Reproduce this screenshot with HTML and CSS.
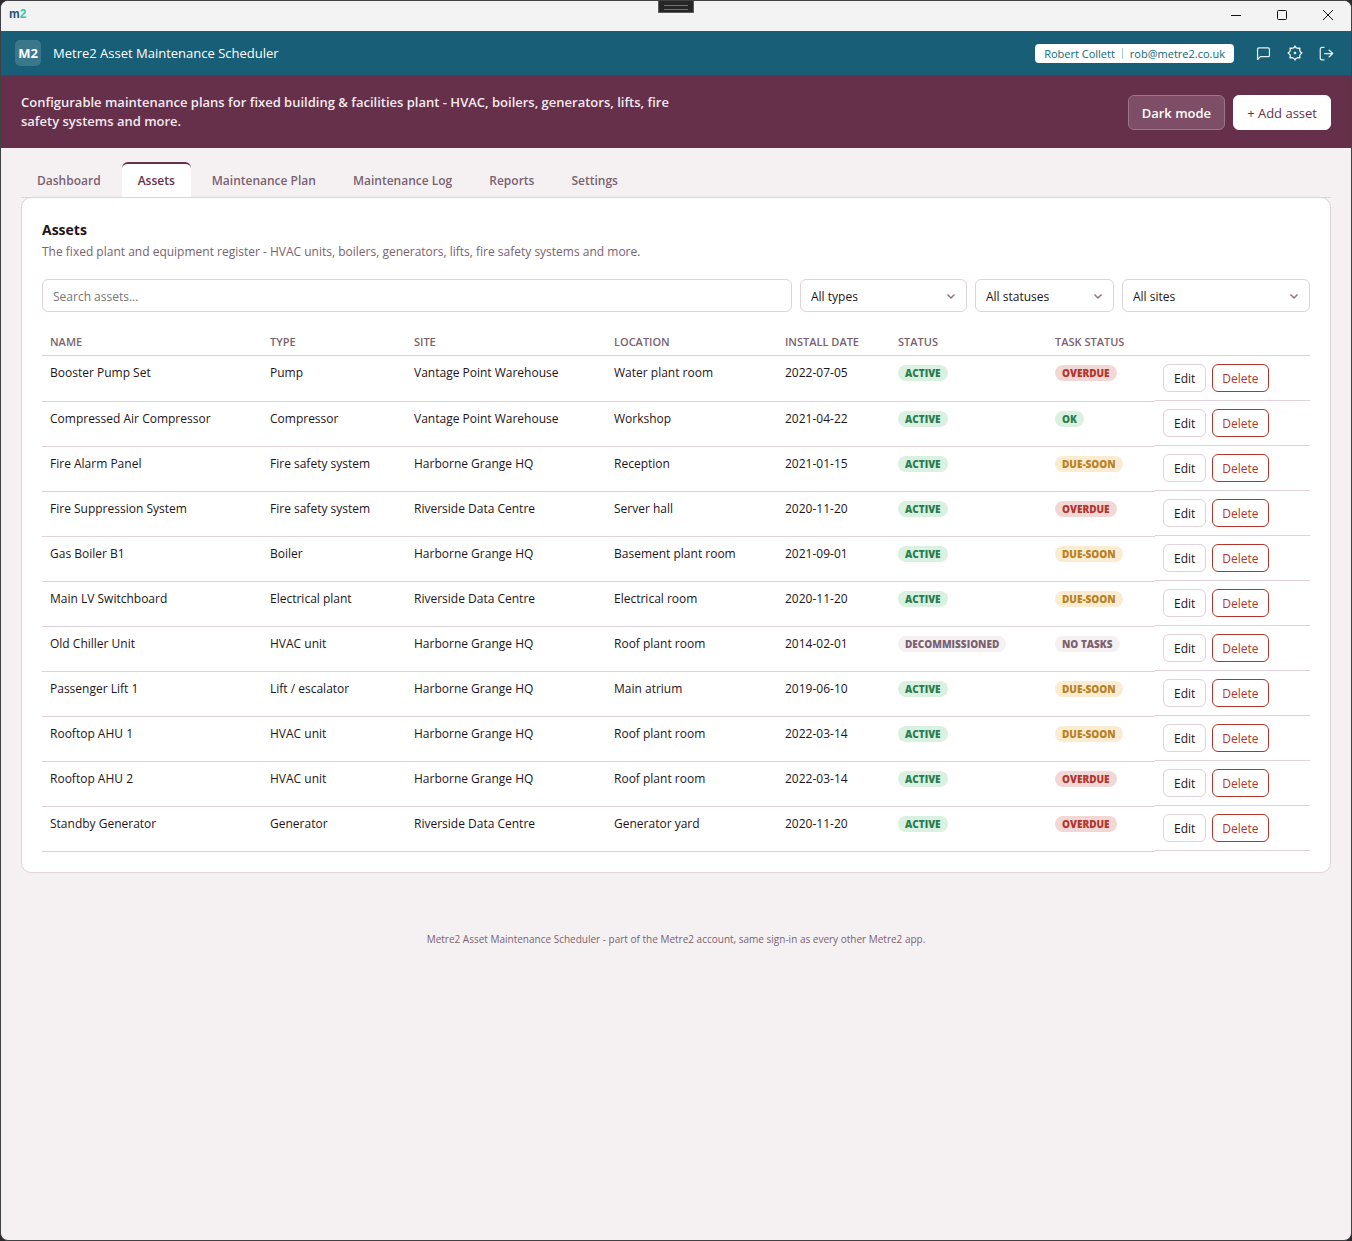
FILE: index.html
```
<!DOCTYPE html>
<html lang="en">
<head>
    <meta charset="UTF-8">
    <meta name="viewport" content="width=device-width, initial-scale=1.0">
    <title>Metre2 Asset Maintenance Scheduler</title>
    <link rel="stylesheet" href="styles.css">
</head>
<body>
    <div class="window">
        <div class="titlebar">
            <span class="app-icon">m<span>2</span></span>
            <div class="grip"></div>
            <div class="window-controls">
                <button type="button" aria-label="Minimise"><svg width="12" height="12" viewBox="0 0 12 12"><path d="M1 6.5h10"/></svg></button>
                <button type="button" aria-label="Maximise"><svg width="12" height="12" viewBox="0 0 12 12"><rect x="1.5" y="1.5" width="9" height="9" rx="1"/></svg></button>
                <button type="button" aria-label="Close"><svg width="12" height="12" viewBox="0 0 12 12"><path d="M1 1l10 10M11 1L1 11"/></svg></button>
            </div>
        </div>

        <header class="topbar">
            <span class="logo">M2</span>
            <span class="app-name">Metre2 Asset Maintenance Scheduler</span>
            <div class="user"><span>Robert Collett</span><span class="email">rob@metre2.co.uk</span></div>
            <div class="top-icons">
                <button type="button" aria-label="Feedback"><svg width="15" height="15" viewBox="0 0 24 24"><path d="M21.500 15a2 2 0 0 1-2 2H7l-4.500 4.500V5a2 2 0 0 1 2-2h15a2 2 0 0 1 2 2z"/></svg></button>
                <button type="button" aria-label="Account settings"><svg width="16" height="16" viewBox="0 0 24 24"><path d="M12 1.500q1.200 3.200 3.200 3.300t4.200-.2q-.5 3-.1 4.300t3.200 3.100q-2.800 1.700-3.200 3.100t.1 4.300q-2.200-.4-4.200-.2T12 22.500q-1.200-3.200-3.200-3.300t-4.200.2q.5-3 .1-4.300T1.500 12q2.800-1.700 3.200-3.100t-.1-4.300q2.200.4 4.200.2T12 1.500z"/><circle cx="12" cy="12" r="1"/></svg></button>
                <button type="button" aria-label="Sign out"><svg width="15" height="15" viewBox="0 0 24 24"><path d="M8 22H5a3 3 0 0 1-3-3V5a3 3 0 0 1 3-3h3M16 17.500l6-5.500-6-5.500M22 12H9"/></svg></button>
            </div>
        </header>

        <div class="hero">
            <p>Configurable maintenance plans for fixed building &amp; facilities plant - HVAC, boilers, generators, lifts, fire safety systems and more.</p>
            <div class="hero-actions">
                <button type="button" class="btn-ghost">Dark mode</button>
                <button type="button" class="btn-light">+ Add asset</button>
            </div>
        </div>

        <main class="content">
            <nav class="tabs">
                <a href="#dashboard">Dashboard</a>
                <a href="#assets" class="active">Assets</a>
                <a href="#plan">Maintenance Plan</a>
                <a href="#log">Maintenance Log</a>
                <a href="#reports">Reports</a>
                <a href="#settings">Settings</a>
            </nav>

            <section class="panel" id="assets">
                <h2>Assets</h2>
                <p class="panel-desc">The fixed plant and equipment register - HVAC units, boilers, generators, lifts, fire safety systems and more.</p>

                <div class="filters">
                    <input type="text" placeholder="Search assets..." aria-label="Search assets">
                    <div class="select types">
                        <select aria-label="Type"><option>All types</option></select>
                        <svg width="8" height="5" viewBox="0 0 8 5"><path d="M.5.5L4 4 7.500.5"/></svg>
                    </div>
                    <div class="select statuses">
                        <select aria-label="Status"><option>All statuses</option></select>
                        <svg width="8" height="5" viewBox="0 0 8 5"><path d="M.5.5L4 4 7.500.5"/></svg>
                    </div>
                    <div class="select sites">
                        <select aria-label="Site"><option>All sites</option></select>
                        <svg width="8" height="5" viewBox="0 0 8 5"><path d="M.5.5L4 4 7.500.5"/></svg>
                    </div>
                </div>

                <table>
                    <thead>
                        <tr>
                            <th>Name</th>
                            <th class="col-type">Type</th>
                            <th class="col-site">Site</th>
                            <th class="col-location">Location</th>
                            <th class="col-date">Install date</th>
                            <th class="col-status">Status</th>
                            <th class="col-task">Task status</th>
                            <th class="col-actions"></th>
                        </tr>
                    </thead>
                    <tbody>
                        <tr>
                            <td>Booster Pump Set</td><td>Pump</td><td>Vantage Point Warehouse</td><td>Water plant room</td><td>2022-07-05</td>
                            <td><span class="pill green">Active</span></td><td><span class="pill red">Overdue</span></td>
                            <td class="actions"><button type="button">Edit</button><button type="button" class="danger">Delete</button></td>
                        </tr>
                        <tr>
                            <td>Compressed Air Compressor</td><td>Compressor</td><td>Vantage Point Warehouse</td><td>Workshop</td><td>2021-04-22</td>
                            <td><span class="pill green">Active</span></td><td><span class="pill green">OK</span></td>
                            <td class="actions"><button type="button">Edit</button><button type="button" class="danger">Delete</button></td>
                        </tr>
                        <tr>
                            <td>Fire Alarm Panel</td><td>Fire safety system</td><td>Harborne Grange HQ</td><td>Reception</td><td>2021-01-15</td>
                            <td><span class="pill green">Active</span></td><td><span class="pill amber">Due-soon</span></td>
                            <td class="actions"><button type="button">Edit</button><button type="button" class="danger">Delete</button></td>
                        </tr>
                        <tr>
                            <td>Fire Suppression System</td><td>Fire safety system</td><td>Riverside Data Centre</td><td>Server hall</td><td>2020-11-20</td>
                            <td><span class="pill green">Active</span></td><td><span class="pill red">Overdue</span></td>
                            <td class="actions"><button type="button">Edit</button><button type="button" class="danger">Delete</button></td>
                        </tr>
                        <tr>
                            <td>Gas Boiler B1</td><td>Boiler</td><td>Harborne Grange HQ</td><td>Basement plant room</td><td>2021-09-01</td>
                            <td><span class="pill green">Active</span></td><td><span class="pill amber">Due-soon</span></td>
                            <td class="actions"><button type="button">Edit</button><button type="button" class="danger">Delete</button></td>
                        </tr>
                        <tr>
                            <td>Main LV Switchboard</td><td>Electrical plant</td><td>Riverside Data Centre</td><td>Electrical room</td><td>2020-11-20</td>
                            <td><span class="pill green">Active</span></td><td><span class="pill amber">Due-soon</span></td>
                            <td class="actions"><button type="button">Edit</button><button type="button" class="danger">Delete</button></td>
                        </tr>
                        <tr>
                            <td>Old Chiller Unit</td><td>HVAC unit</td><td>Harborne Grange HQ</td><td>Roof plant room</td><td>2014-02-01</td>
                            <td><span class="pill">Decommissioned</span></td><td><span class="pill">No tasks</span></td>
                            <td class="actions"><button type="button">Edit</button><button type="button" class="danger">Delete</button></td>
                        </tr>
                        <tr>
                            <td>Passenger Lift 1</td><td>Lift / escalator</td><td>Harborne Grange HQ</td><td>Main atrium</td><td>2019-06-10</td>
                            <td><span class="pill green">Active</span></td><td><span class="pill amber">Due-soon</span></td>
                            <td class="actions"><button type="button">Edit</button><button type="button" class="danger">Delete</button></td>
                        </tr>
                        <tr>
                            <td>Rooftop AHU 1</td><td>HVAC unit</td><td>Harborne Grange HQ</td><td>Roof plant room</td><td>2022-03-14</td>
                            <td><span class="pill green">Active</span></td><td><span class="pill amber">Due-soon</span></td>
                            <td class="actions"><button type="button">Edit</button><button type="button" class="danger">Delete</button></td>
                        </tr>
                        <tr>
                            <td>Rooftop AHU 2</td><td>HVAC unit</td><td>Harborne Grange HQ</td><td>Roof plant room</td><td>2022-03-14</td>
                            <td><span class="pill green">Active</span></td><td><span class="pill red">Overdue</span></td>
                            <td class="actions"><button type="button">Edit</button><button type="button" class="danger">Delete</button></td>
                        </tr>
                        <tr>
                            <td>Standby Generator</td><td>Generator</td><td>Riverside Data Centre</td><td>Generator yard</td><td>2020-11-20</td>
                            <td><span class="pill green">Active</span></td><td><span class="pill red">Overdue</span></td>
                            <td class="actions"><button type="button">Edit</button><button type="button" class="danger">Delete</button></td>
                        </tr>
                    </tbody>
                </table>
            </section>
        </main>

        <footer>Metre2 Asset Maintenance Scheduler - part of the Metre2 account, same sign-in as every other Metre2 app.</footer>
    </div>
</body>
</html>
```
FILE: styles.css
```
:root {
    --teal: #175e76;
    --plum: #66304a;
    --bg: #f5f1f3;
    --border: #e0d2d9;
    --text: #1e141a;
    --muted: #7a6270;
    --green: #2a7d50;
    --red: #b3352c;
    --amber: #b98122;
}

* {
    box-sizing: border-box;
}

body {
    margin: 0;
    background: #2b2b2d;
    color: var(--text);
    font-family: "Segoe UI", "Open Sans", "Noto Sans", sans-serif;
    font-size: 12px;
    line-height: 18px;
}

button,
input,
select {
    font: inherit;
    color: inherit;
}

svg {
    fill: none;
    stroke: currentColor;
    display: block;
}

.window {
    display: flex;
    flex-direction: column;
    min-height: 100vh;
    background: var(--bg);
    border: 1px solid #414143;
    border-radius: 8px;
    overflow: hidden;
}

/* Title bar */
.titlebar {
    display: grid;
    grid-template-columns: 1fr auto 1fr;
    height: 30px;
    background: #f3f3f3;
    color: #111;
}

.app-icon {
    padding: 3px 8px;
    font-family: "Liberation Sans", Arial, sans-serif;
    font-size: 12px;
    line-height: 20px;
    font-weight: 700;
    color: #24507c;
}

.app-icon span {
    color: #35c8a0;
}

.grip {
    width: 36px;
    height: 12px;
    padding: 4px 5px;
    background: #262626;
    border: 1px solid #5c5c5c;
    border-top: 0;
}

.grip::before {
    content: "";
    display: block;
    height: 3px;
    border: solid #6e6e6e;
    border-width: 1px 0;
}

.window-controls {
    display: flex;
    justify-content: flex-end;
}

.window-controls button {
    display: grid;
    place-items: center;
    width: 46px;
    height: 28px;
    padding: 0;
    border: 0;
    background: none;
}

/* Top bar */
.topbar {
    display: flex;
    align-items: center;
    height: 44px;
    padding: 0 17px 0 14px;
    background: var(--teal);
    color: #fff;
}

.logo {
    width: 26px;
    margin-right: 12px;
    border-radius: 5px;
    background: #3a778b;
    font-size: 13px;
    font-weight: 700;
    line-height: 26px;
    text-align: center;
}

.app-name {
    font-size: 13px;
    font-weight: 500;
}

.user {
    display: flex;
    margin-left: auto;
    padding: 0 9px;
    border-radius: 4px;
    background: #fff;
    color: #0f6a78;
    font-size: 11px;
    line-height: 19px;
}

.email {
    display: flex;
    align-items: center;
}

.email::before {
    content: "";
    height: 11px;
    margin: 0 7px;
    border-left: 1px solid #a9cbd2;
}

.top-icons {
    display: flex;
    gap: 16px;
    margin-left: 22px;
}

.top-icons button {
    display: grid;
    place-items: center;
    height: 16px;
    padding: 0;
    border: 0;
    background: none;
    color: #e5f0f2;
    stroke-width: 2;
    stroke-linejoin: round;
    stroke-linecap: round;
}

/* Hero */
.hero {
    display: flex;
    align-items: center;
    justify-content: space-between;
    padding: 18px 20px 17px;
    background: var(--plum);
    color: #f3eaee;
}

.hero p {
    max-width: 680px;
    margin: 0;
    font-weight: 600;
    font-size: 13px;
    line-height: 19px;
}

.hero-actions {
    display: flex;
    gap: 8px;
}

.hero-actions button {
    height: 35px;
    padding: 2px 13px 0;
    border: 1px solid #fff;
    border-radius: 6px;
    font-size: 13px;
    font-weight: 600;
}

.hero-actions .btn-ghost {
    background: #7d4e65;
    border-color: #9c7688;
    color: #fff;
}

.hero-actions .btn-light {
    background: #fff;
    color: var(--plum);
    font-weight: 500;
}

/* Tabs and panel */
.content {
    padding: 14px 20px 0;
}

.tabs {
    display: flex;
    gap: 5px;
    border-bottom: 1px solid var(--border);
}

.tabs a {
    padding: 8px 16px 7px;
    border-top: 2px solid transparent;
    border-radius: 6px 6px 0 0;
    color: var(--muted);
    font-weight: 600;
    text-decoration: none;
}

.tabs .active {
    border-top-color: var(--plum);
    background: #fff;
    color: var(--plum);
}

.panel {
    margin-top: -1px;
    padding: 20px;
    background: #fff;
    border: 1px solid var(--border);
    border-radius: 10px;
}

.panel h2 {
    margin: 2px 0 3px;
    font-size: 14px;
    line-height: 20px;
}

.panel-desc {
    margin: 0 0 18px;
    color: var(--muted);
}

.filters {
    display: flex;
    gap: 8px;
    margin-bottom: 16px;
}

.filters input,
.filters select {
    width: 100%;
    height: 33px;
    padding: 2px 10px 0;
    background: #fff;
    border: 1px solid var(--border);
    border-radius: 6px;
    appearance: none;
}

.filters input {
    flex: 1;
}

.filters input::placeholder {
    color: #757575;
}

.select {
    position: relative;
}

.select svg {
    position: absolute;
    right: 12px;
    top: 15px;
    color: #8d7683;
    stroke-width: 1.500;
    pointer-events: none;
}

.types {
    width: 167px;
}

.statuses {
    width: 139px;
}

.sites {
    width: 188px;
}

/* Asset table */
table {
    width: 100%;
    border-collapse: collapse;
    table-layout: fixed;
}

th {
    padding: 6px 8px;
    border-bottom: 1px solid var(--border);
    color: var(--muted);
    font-size: 11px;
    line-height: 15px;
    text-align: left;
    text-transform: uppercase;
    font-weight: 600;
}

td {
    padding: 8px;
    border-bottom: 1px solid var(--border);
    vertical-align: top;
}

.col-type { width: 144px; }
.col-site { width: 200px; }
.col-location { width: 171px; }
.col-date { width: 113px; }
.col-status { width: 157px; }
.col-task { width: 108px; }
.col-actions { width: 155px; }

.actions {
    display: flex;
    gap: 6px;
}

.actions button {
    height: 28px;
    padding: 2px 10px 0;
    background: #fff;
    border: 1px solid var(--border);
    border-radius: 6px;
    font-weight: 500;
}

.actions .danger {
    padding: 2px 9px 0;
    border-color: var(--red);
    color: var(--red);
}

.pill {
    display: inline-block;
    padding: 0 7px;
    border-radius: 8px;
    background: var(--bg);
    color: var(--muted);
    font-size: 10px;
    font-weight: 800;
    line-height: 16px;
    text-transform: uppercase;
}

.green {
    background: #daf0e1;
    color: var(--green);
}

.red {
    background: #f1d8d7;
    color: var(--red);
}

.amber {
    background: #faecd2;
    color: var(--amber);
}

footer {
    padding: 57px 20px;
    color: var(--muted);
    font-size: 10px;
    text-align: center;
}
```
